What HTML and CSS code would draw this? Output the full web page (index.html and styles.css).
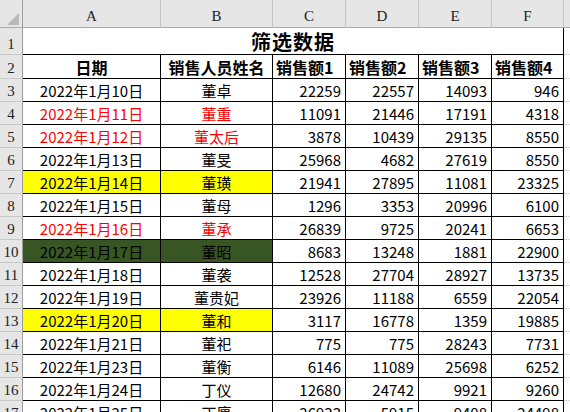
FILE: index.html
```html
<!DOCTYPE html>
<html lang="zh-CN">
<head>
<meta charset="utf-8">
<title>筛选数据</title>
<link rel="stylesheet" href="styles.css">
</head>
<body>
<div class="sheet">
  <div class="ch corner"><svg class="tri" width="12" height="12" viewBox="0 0 12 12"><polygon points="12,0 12,12 0,12" fill="#b9b9b9"/></svg></div>
  <div class="ch">A</div><div class="ch">B</div><div class="ch">C</div><div class="ch">D</div><div class="ch">E</div><div class="ch">F</div><div class="ch chfill"></div>

  <div class="rh">1</div><div class="cell title">筛选数据</div><div class="fill"></div>

  <div class="rh">2</div>
  <div class="cell hdr ctr">日期</div><div class="cell hdr ctr">销售人员姓名</div>
  <div class="cell hdr">销售额1</div><div class="cell hdr">销售额2</div><div class="cell hdr">销售额3</div><div class="cell hdr">销售额4</div><div class="fill"></div>

  <div class="rh">3</div><div class="cell ctr">2022年1月10日</div><div class="cell ctr">董卓</div><div class="cell num">22259</div><div class="cell num">22557</div><div class="cell num">14093</div><div class="cell num">946</div><div class="fill"></div>
  <div class="rh">4</div><div class="cell ctr red">2022年1月11日</div><div class="cell ctr red">董重</div><div class="cell num">11091</div><div class="cell num">21446</div><div class="cell num">17191</div><div class="cell num">4318</div><div class="fill"></div>
  <div class="rh">5</div><div class="cell ctr red">2022年1月12日</div><div class="cell ctr red">董太后</div><div class="cell num">3878</div><div class="cell num">10439</div><div class="cell num">29135</div><div class="cell num">8550</div><div class="fill"></div>
  <div class="rh">6</div><div class="cell ctr">2022年1月13日</div><div class="cell ctr">董旻</div><div class="cell num">25968</div><div class="cell num">4682</div><div class="cell num">27619</div><div class="cell num">8550</div><div class="fill"></div>
  <div class="rh">7</div><div class="cell ctr yel">2022年1月14日</div><div class="cell ctr yel">董璜</div><div class="cell num">21941</div><div class="cell num">27895</div><div class="cell num">11081</div><div class="cell num">23325</div><div class="fill"></div>
  <div class="rh">8</div><div class="cell ctr">2022年1月15日</div><div class="cell ctr">董母</div><div class="cell num">1296</div><div class="cell num">3353</div><div class="cell num">20996</div><div class="cell num">6100</div><div class="fill"></div>
  <div class="rh">9</div><div class="cell ctr red">2022年1月16日</div><div class="cell ctr red">董承</div><div class="cell num">26839</div><div class="cell num">9725</div><div class="cell num">20241</div><div class="cell num">6653</div><div class="fill"></div>
  <div class="rh">10</div><div class="cell ctr grn">2022年1月17日</div><div class="cell ctr grn">董昭</div><div class="cell num">8683</div><div class="cell num">13248</div><div class="cell num">1881</div><div class="cell num">22900</div><div class="fill"></div>
  <div class="rh">11</div><div class="cell ctr">2022年1月18日</div><div class="cell ctr">董袭</div><div class="cell num">12528</div><div class="cell num">27704</div><div class="cell num">28927</div><div class="cell num">13735</div><div class="fill"></div>
  <div class="rh">12</div><div class="cell ctr">2022年1月19日</div><div class="cell ctr">董贵妃</div><div class="cell num">23926</div><div class="cell num">11188</div><div class="cell num">6559</div><div class="cell num">22054</div><div class="fill"></div>
  <div class="rh">13</div><div class="cell ctr yel">2022年1月20日</div><div class="cell ctr yel">董和</div><div class="cell num">3117</div><div class="cell num">16778</div><div class="cell num">1359</div><div class="cell num">19885</div><div class="fill"></div>
  <div class="rh">14</div><div class="cell ctr">2022年1月21日</div><div class="cell ctr">董祀</div><div class="cell num">775</div><div class="cell num">775</div><div class="cell num">28243</div><div class="cell num">7731</div><div class="fill"></div>
  <div class="rh">15</div><div class="cell ctr">2022年1月23日</div><div class="cell ctr">董衡</div><div class="cell num">6146</div><div class="cell num">11089</div><div class="cell num">25698</div><div class="cell num">6252</div><div class="fill"></div>
  <div class="rh">16</div><div class="cell ctr">2022年1月24日</div><div class="cell ctr">丁仪</div><div class="cell num">12680</div><div class="cell num">24742</div><div class="cell num">9921</div><div class="cell num">9260</div><div class="fill"></div>
  <div class="rh">17</div><div class="cell ctr">2022年1月25日</div><div class="cell ctr">丁廙</div><div class="cell num">26933</div><div class="cell num">5915</div><div class="cell num">9408</div><div class="cell num">24498</div><div class="fill"></div>
</div>
</body>
</html>
```
FILE: styles.css
```css
html, body {
  margin: 0;
  padding: 0;
  background: #ffffff;
}
body {
  width: 570px;
  height: 412px;
  overflow: hidden;
}
.sheet {
  display: grid;
  grid-template-columns: 23px 138px 112px 73px 73px 73px 72px 1fr;
  grid-template-rows: 28px 27px 24px;
  grid-auto-rows: 23px;
  font-family: "Noto Sans CJK SC", sans-serif;
  font-size: 15px;
  color: #000;
}
.sheet > div {
  box-sizing: border-box;
  display: flex;
  align-items: center;
  overflow: hidden;
  white-space: nowrap;
}
.ch {
  background: #e6e6e6;
  border-right: 1px solid #c6c6c6;
  border-bottom: 1px solid #ababab;
  justify-content: center;
  align-items: flex-end !important;
  padding-bottom: 2px;
  font-family: "Liberation Serif", serif;
  font-size: 15px;
  color: #222;
}
.corner {
  border-right: 1px solid #9e9e9e;
  justify-content: flex-end !important;
  padding: 0 3px 2px 0;
}
.chfill {
  border-right: none;
}
.rh {
  background: #e6e6e6;
  border-right: 1px solid #9e9e9e;
  border-bottom: 1px solid #c8c8c8;
  justify-content: center;
  align-items: flex-end !important;
  padding-bottom: 1px;
  font-family: "Liberation Serif", serif;
  font-size: 15px;
  color: #222;
}
.cell {
  border-right: 1px solid #000;
  border-bottom: 1px solid #000;
  padding: 0 3px;
}
.fill {
  border-bottom: 1px solid #d9d9d9;
}
.title {
  grid-column: span 6;
  justify-content: center;
  font-size: 20px;
  font-weight: 700;
  letter-spacing: 1px;
}
.hdr {
  font-size: 16px;
  font-weight: 700;
}
.ctr {
  justify-content: center;
}
.num {
  justify-content: flex-end;
  padding-right: 4px;
}
.red {
  color: #ff0000;
}
.yel {
  background: #ffff00;
}
.grn {
  background: #375623;
}
```
